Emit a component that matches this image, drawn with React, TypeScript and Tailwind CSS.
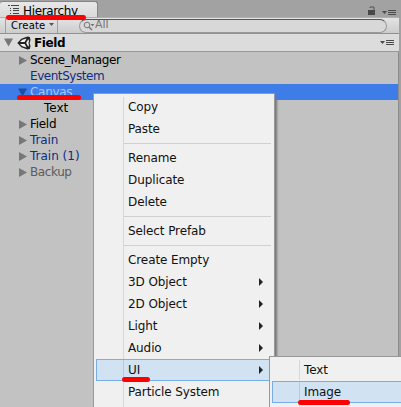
import React from "react";

type TreeItem = { label: string; arrow?: "right" | "down"; indent?: boolean; tone: string; selected?: boolean };

const tree: TreeItem[] = [
  { label: "Scene_Manager", arrow: "right", tone: "text-black tracking-[-0.35px]" },
  { label: "EventSystem", tone: "text-[#0c2d83] tracking-[-0.45px]" },
  { label: "Canvas", arrow: "down", tone: "text-[#a5c6f8] tracking-[-0.3px]", selected: true },
  { label: "Text", indent: true, tone: "text-black tracking-[0px]" },
  { label: "Field", arrow: "right", tone: "text-black tracking-[-0.3px]" },
  { label: "Train", arrow: "right", tone: "text-[#0c2d83] tracking-[-0.1px]" },
  { label: "Train (1)", arrow: "right", tone: "text-[#0c2d83] tracking-[0px]" },
  { label: "Backup", arrow: "right", tone: "text-[#5c5c5c] tracking-[-0.4px]" },
];

type MenuEntry = { label: string; sub?: boolean; active?: boolean } | null;

const menu: MenuEntry[] = [
  { label: "Copy" },
  { label: "Paste" },
  null,
  { label: "Rename" },
  { label: "Duplicate" },
  { label: "Delete" },
  null,
  { label: "Select Prefab" },
  null,
  { label: "Create Empty" },
  { label: "3D Object", sub: true },
  { label: "2D Object", sub: true },
  { label: "Light", sub: true },
  { label: "Audio", sub: true },
  { label: "UI", sub: true, active: true },
  { label: "Particle System" },
];

function Fold({ dir, color = "#777777" }: { dir: "right" | "down"; color?: string }) {
  return (
    <svg width="9" height="9" viewBox="0 0 9 9" className="shrink-0" fill={color}>
      {dir === "right" ? <path d="M1 0v9L9 4.5z" /> : <path d="M0 0.5h9L4.5 8.5z" />}
    </svg>
  );
}

function OptionsIcon() {
  return (
    <svg width="14" height="7" viewBox="0 0 14 7" fill="#4a4a4a">
      <path d="M0 2h5L2.5 5z" />
      <path d="M6 1h8v1H6zM6 3h8v1H6zM6 5h8v1H6z" />
    </svg>
  );
}

function SceneIcon() {
  return (
    <svg width="14" height="14" viewBox="0 0 14 14">
      <path d="M0.3 7 4.3 2.8 10.4 0.6 12.8 1 13.5 4 12.6 7l.9 3-.7 3-2.4.4L4.3 11.2z" fill="#222222" />
      <path d="M3 6.1 5.4 3.7 9.6 2.5 7.6 6.1z" fill="#f4f4f4" />
      <path d="M3 7.9 5.4 10.3 9.6 11.5 7.6 7.9z" fill="#f4f4f4" />
      <path d="M9.2 7 11.3 3.2 12 5 11.4 7 12 9 11.3 10.8z" fill="#f4f4f4" />
    </svg>
  );
}

function MenuRow({ entry, gutter }: { entry: MenuEntry; gutter: string }) {
  if (!entry) {
    return (
      <div className="flex h-[7px] items-center pr-px">
        <div className={gutter} />
        <div className="h-px flex-1 bg-[#d0d0d0]" />
      </div>
    );
  }
  return (
    <div className={"flex h-[22px] items-center " + (entry.active ? "border border-[#78aee5] bg-[#d1e2f2]" : "border border-transparent")}>
      <div className={gutter + " h-full border-r " + (entry.active ? "border-[#bccbda]" : "border-[#d7d7d7]")} />
      <span className="ml-1 flex-1 leading-5">{entry.label}</span>
      {entry.sub && (
        <svg width="4" height="8" viewBox="0 0 4 8" className="mr-[8px]" fill="#222222">
          <path d="M0 0l4 4-4 4z" />
        </svg>
      )}
    </div>
  );
}

export default function App() {
  return (
    <div className="relative flex h-[407px] w-[401px] flex-col overflow-hidden bg-[#a2a2a2] font-['DejaVu_Sans',sans-serif] text-xs whitespace-nowrap">
      <div className="flex h-[17px] shrink-0 items-end">
        <div className="flex h-[16px] w-[98px] items-center rounded-t-[3px] border-t border-r border-[#858585] bg-linear-to-b from-[#e8e8e8] to-[#dadada] pl-2">
          <svg width="11" height="9" viewBox="0 0 11 9" className="mb-px" fill="#444444">
            <path d="M0 0h2v1H0zM3 0h8v1H3zM2 3h1v1H2zM5 3h6v1H5zM2 5h1v1H2zM5 5h6v1H5zM2 8h1v1H2zM5 8h6v1H5z" />
          </svg>
          <span className="ml-1 pt-[2px] tracking-[-0.35px]">Hierarchy</span>
        </div>
        <div className="flex h-full flex-1 items-end justify-end pr-[5px]">
          <svg width="8" height="10" viewBox="0 0 8 10" className="mr-[6px] mb-px">
            <path d="M2 2V1h4v4" fill="none" stroke="#555555" />
            <path d="M0 4h7v5H0z" fill="#484848" />
          </svg>
          <div className="mb-px"><OptionsIcon /></div>
        </div>
      </div>

      <div className="flex h-[17px] w-[399px] shrink-0 items-center border-t border-b border-t-[#b0b0b0] border-b-[#929292] bg-linear-to-b from-[#e4e4e4] to-[#cccccc] pl-[5px]">
        <div className="flex h-full w-[53px] items-center border-x border-[#a0a0a0] pl-[5px] text-[10px] tracking-[0.2px]">
          <span>Create</span>
          <svg width="5" height="3" viewBox="0 0 5 3" className="mb-[3px] ml-[4px]" fill="#555555"><path d="M0 0h5L2.5 3z" /></svg>
        </div>
        <div className="ml-[21px] flex h-[14px] w-[308px] items-center rounded-full border border-[#999999] border-t-[#555555] bg-[#d8d8d8] pl-[3px]">
          <svg width="12" height="10" viewBox="0 0 12 10" fill="none" stroke="#777777">
            <circle cx="4" cy="4" r="2.8" />
            <path d="M6 6l3 3" strokeWidth="1.5" />
            <path d="M7.5 3h4L9.5 5.5z" fill="#777777" stroke="none" />
          </svg>
          <span className="-mt-px text-[11px] leading-3 text-[#777777]">All</span>
        </div>
      </div>

      <div className="flex h-[18px] w-[399px] shrink-0 items-center border-b border-[#999999] bg-[#dcdcdc] pr-[5px] pl-1">
        <Fold dir="down" />
        <div className="ml-1"><SceneIcon /></div>
        <span className="ml-[3px] flex-1 font-bold tracking-[-0.4px]">Field</span>
        <OptionsIcon />
      </div>

      <div className="w-[399px] flex-1 border-r border-[#8c8c8c] bg-[#c2c2c2]">
        {tree.map((item) => (
          <div
            key={item.label}
            className={"flex h-4 items-center " + item.tone + (item.selected ? " bg-[#3e7de7]" : "") + (item.indent ? " pl-[44px]" : item.arrow ? " pl-[18px]" : " pl-[30px]")}
          >
            {item.arrow && (
              <div className="mr-[3px]"><Fold dir={item.arrow} color={item.selected ? "#1c4f9f" : "#777777"} /></div>
            )}
            <span>{item.label}</span>
          </div>
        ))}
      </div>

      <div className="absolute top-[93px] left-[93px] h-[330px] w-[182px] border border-[#999999] bg-[#f0f0f0] p-[2px] tracking-[-0.1px] text-[#111111] shadow-[3px_4px_2px_-1px_#777777]">
        <div className="pointer-events-none absolute top-[3px] bottom-0 left-[29px] w-px bg-[#d7d7d7]" />
        <div className="relative">
          {menu.map((entry, i) => (
            <MenuRow key={i} entry={entry} gutter="w-[27px]" />
          ))}
        </div>
      </div>

      <div className="absolute top-[356px] left-[269px] h-[70px] w-[150px] border border-[#999999] bg-[#f0f0f0] p-[2px] tracking-[-0.1px] text-[#111111]">
        <MenuRow entry={{ label: "Text" }} gutter="w-[27px]" />
        <MenuRow entry={{ label: "Image", active: true }} gutter="w-[27px]" />
        <MenuRow entry={{ label: "" }} gutter="w-[27px]" />
      </div>

      <div className="absolute top-[15px] left-[6px] h-[5px] w-[80px] rounded-full bg-[#ff0000]" />
      <div className="absolute top-[95px] left-[17px] h-[5px] w-[64px] rounded-full bg-[#ff0000]" />
      <div className="absolute top-[377px] left-[122px] h-[5px] w-[28px] rounded-full bg-[#ff0000]" />
      <div className="absolute top-[400px] left-[298px] h-[5px] w-[52px] rounded-full bg-[#ff0000]" />
    </div>
  );
}
